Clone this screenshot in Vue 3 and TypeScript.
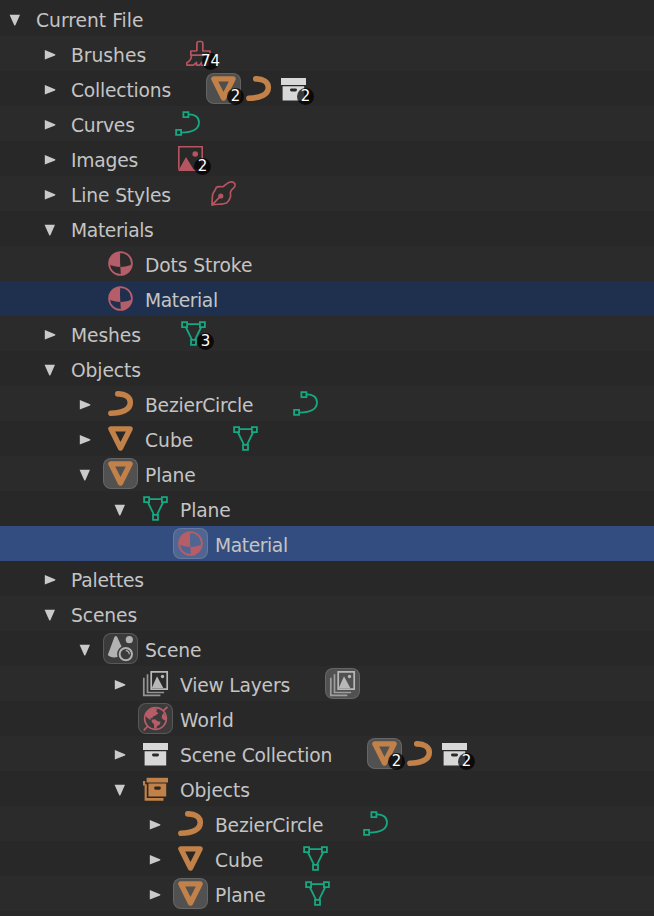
<script setup lang="ts">
import { defineComponent, h } from 'vue'

interface Item {
  icon: string
  box?: 'active' | 'dim'
  badge?: string
}

interface Row {
  level: number
  label: string
  arrow?: 'open' | 'closed'
  lead?: Item
  labelWidth?: number
  tracking?: number
  trail?: Item[]
  state?: 'selected' | 'current'
}

const art: Record<string, string> = {
  mesh: `<g fill="none" stroke="#16a881" stroke-width="1.8"><path d="M1.1 1.1h5v5h-5zM18.9 1.1h5v5h-5zM10 18.9h5v5h-5zM6.1 3.2h12.8M5 6.5l5.9 12.2M20 6.5l-5.9 12.2"/></g>`,
  curve: `<g fill="none" stroke="#16a881" stroke-width="1.8"><path d="M8.4 1.1h5v5h-5zM1.1 18.9h5v5h-5zM13.5 3.3C19.5 3 24 6.2 24 11.3 24 18 17.5 21.5 6.3 21.7"/></g>`,
  obcurve: `<path d="M9.8 2.9C17 2.6 22.3 6 22.3 11.5 22.3 18.6 14 22.2 2.9 22.2" fill="none" stroke="#c18148" stroke-width="5.6" stroke-linecap="round"/>`,
  obmesh: `<path d="M2.9 2.9h19.2L12.5 22z" fill="none" stroke="#c18148" stroke-width="5.4" stroke-linejoin="round"/>`,
  archive: `<path fill="#d8d8d8" fill-rule="evenodd" d="M0 2h25v7H0zM1.6 10.2h21.6v14.4H1.6zM10.5 12.4q-1.5 0-1.5 1.4 0 1.8 1.5 1.8h4q1.5 0 1.5-1.8 0-1.4-1.5-1.4z"/>`,
  obarchive: `<g fill="#c18148"><path d="M3.6 1.8H25v4.7H3.6z"/><path fill-rule="evenodd" d="M5.4 7.6h17.8v13H5.4zM12.5 10.4q-1.3 0-1.3 1.3 0 2 1.3 2h4q1.3 0 1.3-2 0-1.3-1.3-1.3z"/><path d="M0 5h2.2v3.2h1.6v13.9h16.7v2.6H1.6V9.6H0z"/></g>`,
  image: `<g fill="#b55560"><path d="M.8 23.5V.8h23.4v23.4H16" fill="none" stroke="#b55560" stroke-width="1.6"/><path d="M.2 25L8 11l8.6 14z"/><circle cx="17.2" cy="8" r="2.8"/></g>`,
  brush: `<g fill="none" stroke="#b55560" stroke-width="1.7" stroke-linejoin="round"><path d="M10.9 10V2.6Q10.9.5 12.5.5h2.7q1.6 0 1.6 2.1V10H24v4.2H4.8V10h6.1M5.5 14.3c0 3.8-1.4 6-4.6 7.5v2.3h6.6l3-2.8v2.8h3.4l1.8-2.8v2.8H22V14.3"/></g>`,
  pen: `<path d="M.9 24.1C1.5 20 .7 14.8 2.4 11.7 4 9.5 4.7 7.7 5.3 6.5 7.6 4.5 9.9 6.4 12.2 5.5 14.3 4.1 16.5 1.1 20 .9 23.7.8 25 3.8 23.5 6 22.3 7.7 20.1 8.7 19.5 11c-.6 2.2.8 3.5-.2 5.4-.8 1.8-1.5 3.9-3.3 5.3C11.5 23.9 6 22.7.9 24.1L9.3 15.3" fill="none" stroke="#b55560" stroke-width="1.7" stroke-linejoin="round"/><circle cx="9.8" cy="15" r="2.6" fill="#b55560"/>`,
  material: `<circle cx="12.5" cy="12.5" r="11.4" fill="none" stroke="#b55d69" stroke-width="1.8"/><path fill="#b55d69" d="M12.4.8C11.8 6 12 11 12.4 16 8.5 15.9 4.7 15.1.9 13.2.5 6 5.5.8 12.4.8zM12.4 16c4.2-.1 8-1 11.7-2.8-.5 6.2-5.2 10.9-11.3 10.9z"/>`,
  scene: `<path fill="#b2b2b2" d="M6.4.9Q7.8-.9 9.2.9L13.6 10.5A8.6 8.6 0 0 0 9.6 21C5.5 22 1.6 21.1-.2 18.9z"/><circle cx="21.3" cy="3.7" r="3.6" fill="#b2b2b2"/><circle cx="17.8" cy="18.1" r="6.2" fill="none" stroke="#b2b2b2" stroke-width="2"/><path d="M17.8 14.7q3.3.2 3.5 3.5" fill="none" stroke="#b2b2b2" stroke-width="1.3"/>`,
  layers: `<g fill="none" stroke="#b8b8b8" stroke-width="1.7"><path d="M8.2.8h16v17.3h-16z"/><path d="M4.5 3.3v18.2h16.6M.8 6.8v17.5h16.6" opacity=".75"/></g><path fill="#b8b8b8" d="M8.8 17L14 5.2 20.3 17z"/><circle cx="19.5" cy="5.5" r="1.7" fill="#b8b8b8"/>`,
  world: `<circle cx="12.5" cy="12.5" r="10.9" fill="none" stroke="#b55d69" stroke-width="1.6"/><path d="M20 5L24.5.9M5 20L.7 24.3" stroke="#b55d69" stroke-width="1.7"/><path fill="#b55d69" d="M2 9.3L6 4l5.8-2 2.4 1.5-1 2 2.3 1.8-2.7 2-2.7 1.2-1 2-1.7-.8.4 2.5L4.3 12zM8.7 13.7l3.5-.5 2 1.8 3.3.8-.7 2.6-2.6 1.7-1 2.4-2-.1-.2-4.1-2.3-2.3zM20.4 7l2.6 3.3v4.3l-2.2-.5-2.3-2.4.7-2.6z"/>`,
}

const Glyph = defineComponent({
  props: { name: { type: String, required: true } },
  setup: (props) => () =>
    h('svg', { width: 25, height: 25, viewBox: '0 0 25 25', overflow: 'visible', innerHTML: art[props.name] }),
})

const rows: Row[] = [
  { level: 0, label: 'Current File', arrow: 'open', tracking: 0 },
  { level: 1, label: 'Brushes', arrow: 'closed', tracking: 0, labelWidth: 112, trail: [{ icon: 'brush', badge: '74' }] },
  {
    level: 1, label: 'Collections', arrow: 'closed', labelWidth: 137, tracking: -0.2,
    trail: [{ icon: 'obmesh', box: 'active', badge: '2' }, { icon: 'obcurve' }, { icon: 'archive', badge: '2' }],
  },
  { level: 1, label: 'Curves', arrow: 'closed', labelWidth: 101, tracking: -0.2, trail: [{ icon: 'curve' }] },
  { level: 1, label: 'Images', arrow: 'closed', labelWidth: 104, tracking: -0.2, trail: [{ icon: 'image', badge: '2' }] },
  { level: 1, label: 'Line Styles', arrow: 'closed', labelWidth: 137, tracking: -0.15, trail: [{ icon: 'pen' }] },
  { level: 1, label: 'Materials', arrow: 'open', tracking: -0.35 },
  { level: 2, label: 'Dots Stroke', lead: { icon: 'material' } },
  { level: 2, label: 'Material', tracking: -0.4, lead: { icon: 'material' }, state: 'selected' },
  { level: 1, label: 'Meshes', arrow: 'closed', labelWidth: 107, trail: [{ icon: 'mesh', badge: '3' }] },
  { level: 1, label: 'Objects', arrow: 'open' },
  { level: 2, label: 'BezierCircle', tracking: -0.22, arrow: 'closed', lead: { icon: 'obcurve' }, labelWidth: 150, trail: [{ icon: 'curve' }] },
  { level: 2, label: 'Cube', tracking: 0, arrow: 'closed', lead: { icon: 'obmesh' }, labelWidth: 90, trail: [{ icon: 'mesh' }] },
  { level: 2, label: 'Plane', arrow: 'open', lead: { icon: 'obmesh', box: 'active' } },
  { level: 3, label: 'Plane', arrow: 'open', lead: { icon: 'mesh' } },
  { level: 4, label: 'Material', tracking: -0.4, lead: { icon: 'material', box: 'active' }, state: 'current' },
  { level: 1, label: 'Palettes', arrow: 'closed', tracking: -0.2 },
  { level: 1, label: 'Scenes', arrow: 'open' },
  { level: 2, label: 'Scene', arrow: 'open', lead: { icon: 'scene', box: 'dim' } },
  { level: 3, label: 'View Layers', tracking: -0.2, arrow: 'closed', lead: { icon: 'layers' }, labelWidth: 152, trail: [{ icon: 'layers', box: 'active' }] },
  { level: 3, label: 'World', tracking: 0.1, lead: { icon: 'world', box: 'dim' } },
  {
    level: 3, label: 'Scene Collection', tracking: -0.2, arrow: 'closed', lead: { icon: 'archive' }, labelWidth: 194,
    trail: [{ icon: 'obmesh', box: 'active', badge: '2' }, { icon: 'obcurve' }, { icon: 'archive', badge: '2' }],
  },
  { level: 3, label: 'Objects', arrow: 'open', lead: { icon: 'obarchive' } },
  { level: 4, label: 'BezierCircle', tracking: -0.22, arrow: 'closed', lead: { icon: 'obcurve' }, labelWidth: 150, trail: [{ icon: 'curve' }] },
  { level: 4, label: 'Cube', tracking: 0, arrow: 'closed', lead: { icon: 'obmesh' }, labelWidth: 90, trail: [{ icon: 'mesh' }] },
  { level: 4, label: 'Plane', arrow: 'closed', lead: { icon: 'obmesh', box: 'active' }, labelWidth: 92, trail: [{ icon: 'mesh' }] },
]
</script>

<template>
  <main class="outliner">
    <div
      v-for="(row, i) in rows"
      :key="i"
      class="row"
      :class="row.state"
      :style="{ paddingLeft: row.level * 35 + 'px' }"
    >
      <span class="arrow">
        <svg v-if="row.arrow" width="12" height="12" viewBox="0 0 12 12">
          <path v-if="row.arrow === 'open'" d="M.6.8H11L6.5 11q-.7 1-1.4 0z" />
          <path v-else d="M.8.9L11 5.2q1 .6 0 1.2L.8 10.6z" />
        </svg>
      </span>
      <span v-if="row.lead" class="slot" :class="row.lead.box"><Glyph :name="row.lead.icon" /></span>
      <span
        class="label"
        :class="{ spaced: row.lead }"
        :style="{
          width: row.labelWidth ? row.labelWidth + 'px' : 'auto',
          letterSpacing: (row.tracking ?? -0.1) + 'px',
        }"
      >{{ row.label }}</span>
      <span v-for="(item, k) in row.trail" :key="k" class="slot" :class="item.box">
        <Glyph :name="item.icon" />
        <span v-if="item.badge" class="badge">{{ item.badge }}</span>
      </span>
    </div>
  </main>
</template>

<style>
body {
  margin: 0;
  background: #282828;
}
</style>

<style scoped>
.outliner {
  box-sizing: border-box;
  height: 916px;
  padding-top: 1px;
  overflow: hidden;
  background: #282828;
  color: #c4c4c4;
  font-family: 'DejaVu Sans', sans-serif;
  font-size: 18.7px;
}
.row {
  display: flex;
  align-items: center;
  box-sizing: border-box;
  height: 35px;
}
.row:nth-child(even) {
  background: #2b2b2b;
}
.row.selected {
  background: #1e304d;
}
.row.current {
  background: #344d80;
}
.arrow {
  display: flex;
  flex: none;
  box-sizing: border-box;
  width: 33px;
  padding: 2px 0 0 9px;
}
.arrow path {
  fill: #cacaca;
}
.slot {
  position: relative;
  display: flex;
  flex: none;
  align-items: center;
  justify-content: center;
  box-sizing: border-box;
  width: 35px;
  height: 31px;
  border: 1px solid transparent;
  border-radius: 8px;
}
.slot.active {
  background: rgba(255, 255, 255, 0.18);
  border-color: rgba(255, 255, 255, 0.12);
}
.slot.dim {
  background: rgba(255, 255, 255, 0.09);
  border-color: rgba(255, 255, 255, 0.15);
}
.current .slot.active {
  background: rgba(255, 255, 255, 0.14);
}
.label {
  flex: none;
  box-sizing: border-box;
  height: 35px;
  padding: 2px 0 0 3px;
  line-height: 35px;
  white-space: nowrap;
}
.label.spaced {
  padding-left: 7px;
}
.label:not(.spaced) {
  margin-right: 1px;
}
.badge {
  position: absolute;
  left: 20px;
  top: 14px;
  display: flex;
  align-items: center;
  justify-content: center;
  width: 17px;
  height: 17px;
  border-radius: 50%;
  background: rgba(0, 0, 0, 0.74);
  color: #fff;
  font-size: 15px;
  line-height: 17px;
}
</style>
